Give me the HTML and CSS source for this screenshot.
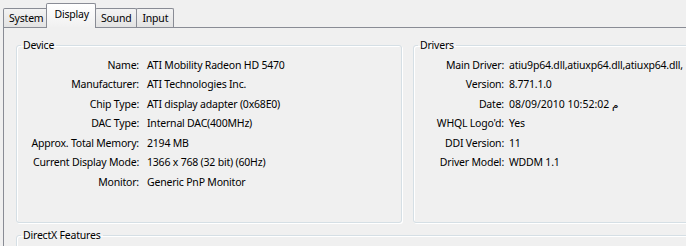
FILE: index.html
```html
<!DOCTYPE html>
<html lang="en">
<head>
    <meta charset="UTF-8">
    <title>DirectX Diagnostic Tool - Display</title>
    <link rel="stylesheet" href="styles.css">
</head>
<body>

    <!-- Tab strip -->
    <div class="tabs">
        <div class="tab">System</div>
        <div class="tab active">Display</div>
        <div class="tab">Sound</div>
        <div class="tab">Input</div>
    </div>

    <div class="panel">
        <div class="top-row">
            <fieldset class="group">
                <legend>Device</legend>
                <div class="props device-props">
                    <span class="label">Name:</span><span class="value">ATI Mobility Radeon HD 5470</span>
                    <span class="label">Manufacturer:</span><span class="value">ATI Technologies Inc.</span>
                    <span class="label">Chip Type:</span><span class="value">ATI display adapter (0x68E0)</span>
                    <span class="label">DAC Type:</span><span class="value">Internal DAC(400MHz)</span>
                    <span class="label">Approx. Total Memory:</span><span class="value">2194 MB</span>
                    <span class="label">Current Display Mode:</span><span class="value">1366 x 768 (32 bit) (60Hz)</span>
                    <span class="label">Monitor:</span><span class="value">Generic PnP Monitor</span>
                </div>
            </fieldset>

            <fieldset class="group">
                <legend>Drivers</legend>
                <div class="props driver-props">
                    <span class="label">Main Driver:</span><span class="value">atiu9p64.dll,atiuxp64.dll,atiuxp64.dll,</span>
                    <span class="label">Version:</span><span class="value">8.771.1.0</span>
                    <span class="label">Date:</span><span class="value">08/09/2010 10:52:02 م</span>
                    <span class="label">WHQL Logo'd:</span><span class="value">Yes</span>
                    <span class="label">DDI Version:</span><span class="value">11</span>
                    <span class="label">Driver Model:</span><span class="value">WDDM 1.1</span>
                </div>
            </fieldset>
        </div>

        <fieldset class="group directx">
            <legend>DirectX Features</legend>
        </fieldset>
    </div>

</body>
</html>
```

FILE: styles.css
```css
html, body {
    margin: 0;
    overflow: hidden;
}
body {
    font-family: 'Noto Sans', 'DejaVu Sans', sans-serif;
    font-size: 10.5px;
    letter-spacing: -0.2px;
    color: #000;
    background: #f0f0f0;
    width: 686px;
    height: 246px;
}

/* Tabs */
.tabs {
    display: flex;
    align-items: flex-end;
    height: 27px;
    padding-left: 3px;
    position: relative;
    z-index: 1;
}
.tab {
    height: 18px;
    line-height: 19px;
    padding: 0 5px;
    border: 1px solid #898c95;
    border-bottom: none;
    margin-right: -1px;
    background: linear-gradient(#f3f3f3, #e3e3e3);
    border-radius: 2px 2px 0 0;
}
.tab.active {
    height: 24px;
    line-height: 20px;
    margin: 0 -1px -1px -2px;
    padding: 0 6px 0 7px;
    background: linear-gradient(#ffffff, #f0f0f0);
    position: relative;
}

/* Tab page */
.panel {
    margin-left: 3px;
    width: 760px;
    border: 1px solid #898c95;
    padding: 10px 0 0 12px;
    height: 260px;
}
.top-row {
    display: grid;
    grid-template-columns: 386px 320px;
    grid-template-rows: 185px;
    column-gap: 11px;
}

/* Group boxes */
.group {
    margin: 0;
    padding: 0;
    min-width: 0;
    border: 1px solid #d5dfe5;
    border-radius: 3px;
    box-shadow: inset 1px 1px 0 #fff, 1px 1px 0 #fff;
}
.group legend {
    margin-left: 4px;
    padding: 0 2px;
    line-height: 14px;
}
.directx {
    margin-top: 5px;
    height: 40px;
}

.props {
    display: grid;
    grid-auto-rows: 19.5px;
    align-items: center;
    margin-top: 3px;
    white-space: nowrap;
}
.device-props {
    grid-template-columns: 122px 1fr;
    column-gap: 8px;
}
.driver-props {
    grid-template-columns: 90px 1fr;
    column-gap: 5px;
}
.label {
    text-align: right;
}
```
